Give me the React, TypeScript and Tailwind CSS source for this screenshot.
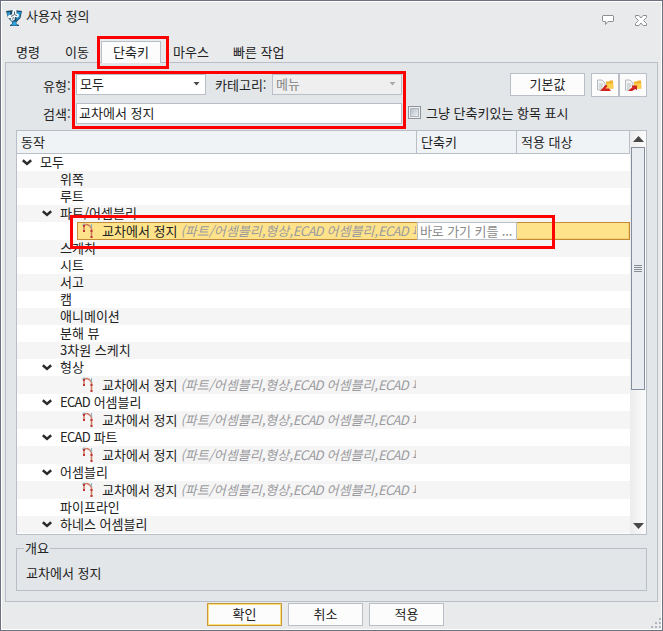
import { clsx } from "clsx";
import type { ReactNode } from "react";

type Row = {
  label: string;
  level: 0 | 1 | 2;
  open?: boolean;
  command?: boolean;
  selected?: boolean;
};

const rows: Row[] = [
  { label: "모두", level: 0, open: true },
  { label: "위쪽", level: 1 },
  { label: "루트", level: 1 },
  { label: "파트/어셈블리", level: 1, open: true },
  { label: "교차에서 정지", level: 2, command: true, selected: true },
  { label: "스케치", level: 1 },
  { label: "시트", level: 1 },
  { label: "서고", level: 1 },
  { label: "캠", level: 1 },
  { label: "애니메이션", level: 1 },
  { label: "분해 뷰", level: 1 },
  { label: "3차원 스케치", level: 1 },
  { label: "형상", level: 1, open: true },
  { label: "교차에서 정지", level: 2, command: true },
  { label: "ECAD 어셈블리", level: 1, open: true },
  { label: "교차에서 정지", level: 2, command: true },
  { label: "ECAD 파트", level: 1, open: true },
  { label: "교차에서 정지", level: 2, command: true },
  { label: "어셈블리", level: 1, open: true },
  { label: "교차에서 정지", level: 2, command: true },
  { label: "파이프라인", level: 1 },
  { label: "하네스 어셈블리", level: 1, open: true },
];

function AppLogo() {
  return (
    <svg width="16" height="17" viewBox="0 0 16 17">
      <path d="M0 2 L8 1 L16 2 L14.5 9 L10.5 13 V15 L13 16 V17 H4 V16 L6 15 V13 L2 9 Z" fill="#1d4a68" />
      <path d="M11 3 L15 3 L13.5 8.5 L10.5 11.5 Z" fill="#2097d8" />
      <path d="M1 3.5 L4 3 L4 6 L2 7.5 Z" fill="#2f9bd6" />
      <path d="M6.5 12.5 H10 V15 L12 16.5 H5 L6.5 15 Z" fill="#2da4dc" />
      <path d="M6.5 1.5 L8.5 0 L10.5 1.5 V4.5 L12.5 5 L13 7.5 L11 8.5 L9 8 L8.5 11 L6 12 L4.5 10.5 L5 9 L2.5 9.5 L1.5 8 L3 6 L6 5.5 Z" fill="#f1f5f8" />
      <path d="M8.5 2.5 V5.5 L5 7.5 M8.5 5.5 L11 6.8 M7.5 8 L6.5 10.5" fill="none" stroke="#2f4858" strokeWidth="0.8" />
    </svg>
  );
}

function Chevron() {
  return (
    <svg width="10" height="7" viewBox="0 0 10 7">
      <path d="M0.8 1.3 L5 4.9 L9.2 1.3" fill="none" stroke="#2b2b2b" strokeWidth="2.6" />
    </svg>
  );
}

function StopIcon() {
  return (
    <svg width="12" height="16" viewBox="0 0 12 16">
      <path d="M2 8.5 V3 C3 0.8 7.5 0.8 9.5 5.5 V14" fill="none" stroke="#d07a62" strokeWidth="1.5" />
      <path d="M9.5 5 V1 M0.5 2.5 L2.5 0.5" stroke="#8eb2c0" strokeWidth="1.2" />
      <path d="M1 2h2v2H1z M1 7h2v2H1z M8.5 7h2v2h-2z M8.5 13h2v2h-2z" fill="#bd3434" />
    </svg>
  );
}

function FolderIcon({ save }: { save?: boolean }) {
  return (
    <svg width="17" height="13" viewBox="0 0 17 13">
      <path d="M0.5 1 H5 L8 4 V11 H0.5 Z" fill="#f2f3f4" stroke="#b6babd" />
      <path d="M2 5h4 M2 7h4 M2 9h3" stroke="#b9bdc0" />
      <path d="M9 2.5 H12 L13 1.5 H16 L16.5 9.5 H9 Z" fill="#f0b02c" />
      <path d="M9 4.5 H16 V9.5 H9 Z" fill="#ffd04f" />
      {save ? (
        <path d="M3 12 L7.5 8 L6.5 6.5 H12 V11.5 L10.5 10 L7 12 Z" fill="#d3221f" />
      ) : (
        <path d="M3 12 L9 5.5 L10.5 7 L8.5 9.5 H12 L14 12 Z" fill="#d3221f" />
      )}
    </svg>
  );
}

function Select({ value, disabled }: { value: string; disabled?: boolean }) {
  return (
    <div
      className={clsx(
        "flex h-[21px] w-[130px] items-center justify-between border border-[#b9bec7] pr-[5px] pl-[3px]",
        disabled ? "bg-[#efefef] text-[#858585]" : "bg-white",
      )}
    >
      <span className="-mt-[2px]">{value}</span>
      <svg width="7" height="4" viewBox="0 0 7 4" className={clsx("mb-[2px]", disabled ? "text-[#a9a9a9]" : "text-[#484848]")}>
        <path d="M0.5 0 H6.5 L3.5 3.5 Z" fill="currentColor" />
      </svg>
    </div>
  );
}

function Button({ children, primary, className }: { children: ReactNode; primary?: boolean; className?: string }) {
  return (
    <button
      className={clsx(
        "flex h-[23px] w-[75px] items-center justify-center border bg-[#fcfcfc] pb-[2px]",
        primary ? "border-[#c8963c] shadow-[inset_0_0_0_1px_#ffe173]" : "border-[#b9bec7]",
        className,
      )}
    >
      {children}
    </button>
  );
}

function ActionRow({ row, index }: { row: Row; index: number }) {
  const striped = index % 2 === 1;

  if (row.command) {
    return (
      <div className={clsx("flex h-[18px] items-center pl-[60px]", striped ? "bg-[#f5f5f5]" : "bg-white")}>
        <div
          className={clsx(
            "flex h-[18px] w-[340px] items-center border-l",
            row.selected ? "border-y border-[#c58a35] bg-[#ffe38b]" : "border-transparent",
          )}
        >
          <div className="flex h-[16px] w-[338px] items-center overflow-hidden leading-[15px] whitespace-nowrap">
            <div className="ml-1 w-5 shrink-0">
              <StopIcon />
            </div>
            <span className="pb-[2px]">{row.label}</span>
            <span className="ml-[3px] pb-[2px] text-[#9b9b9f] italic">
              (파트/어셈블리,형상,<span className="tracking-[-0.7px]">ECAD</span> 어셈블리,
              <span className="tracking-[-0.7px]">ECAD</span> 파트)
            </span>
          </div>
        </div>
        {row.selected && (
          <>
            <div className="flex h-[18px] w-[100px] items-center border border-[#b9bec7] bg-white pb-[2px] pl-[2px] tracking-[-0.1px] whitespace-nowrap text-[#8b8b8b]">
              바로 가기 키를 ...
            </div>
            <div className="h-[18px] flex-1 border-y border-r border-[#c58a35] bg-[#ffe38b] shadow-[inset_-1px_-1px_0_#f5cf72]" />
          </>
        )}
      </div>
    );
  }

  return (
    <div
      className={clsx(
        "flex h-[17px] items-center leading-[15px] whitespace-nowrap",
        striped ? "bg-[#f5f5f5]" : "bg-white",
        row.level === 0 ? "pl-[5px]" : "pl-[25px]",
      )}
    >
      <div className="w-[18px] shrink-0">{row.open && <Chevron />}</div>
      {row.label.startsWith("ECAD") ? (
        <span className="pb-[2px]">
          <span className="tracking-[-0.7px]">ECAD</span>
          {row.label.slice(4)}
        </span>
      ) : (
        <span className="pb-[2px]">{row.label}</span>
      )}
    </div>
  );
}

function Scrollbar() {
  return (
    <div className="flex w-4 flex-col items-center bg-gradient-to-r from-[#ececec] to-[#fcfcfc]">
      <div className="flex h-4 items-center justify-center">
        <svg width="11" height="6" viewBox="0 0 11 6">
          <path d="M0 6 L5.5 0 L11 6 Z" fill="#484848" />
        </svg>
      </div>
      <div className="flex h-[243px] w-[14px] flex-col items-center justify-center gap-px border border-[#858e9c] bg-[#e9edf2]">
        <div className="h-px w-2 bg-[#858e93]" />
        <div className="h-px w-2 bg-[#858e93]" />
        <div className="h-px w-2 bg-[#858e93]" />
        <div className="h-px w-2 bg-[#858e93]" />
      </div>
      <div className="mt-auto flex h-[17px] items-center justify-center">
        <svg width="11" height="6" viewBox="0 0 11 6">
          <path d="M0 0 H11 L5.5 6 Z" fill="#484848" />
        </svg>
      </div>
    </div>
  );
}

export default function App() {
  return (
    <div
      lang="ko"
      className="relative h-[631px] w-[663px] overflow-hidden border border-[#6b727d] bg-[#e9eaec] font-['Noto_Sans_CJK_KR',sans-serif] text-[13px] leading-[17px] text-[#222222]"
    >
      <div className="flex h-full flex-col border border-white">
        {/* Title bar */}
        <div className="flex h-[39px] items-start pt-[7px] pr-[14px] pl-[4px]">
          <AppLogo />
          <span className="ml-1 -mt-[2px]">사용자 정의</span>
          <div className="mt-[6px] ml-auto flex items-start gap-[21px]">
            <svg width="12" height="11" viewBox="0 0 12 11">
              <path d="M1 0.5 H11 L11.5 1 V6 L11 6.5 H6 L3.5 9.5 V6.5 H1 L0.5 6 V1 Z" fill="#fff" stroke="#8d9093" />
            </svg>
            <svg width="12" height="11" viewBox="0 0 12 11">
              <path d="M0.5 0.5 H4 L6 3 L8 0.5 H11.5 V2.5 L8.5 5.5 L11.5 8.5 V10.5 H8 L6 8 L4 10.5 H0.5 V8.5 L3.5 5.5 L0.5 2.5 Z" fill="#fff" stroke="#8d9093" />
            </svg>
          </div>
        </div>

        {/* Tabs */}
        <div className="relative z-10 -mb-px flex h-[22px] items-center pl-[14px]">
          <span className="w-[49px] pb-[2px]">명령</span>
          <span className="w-[36px] pb-[2px]">이동</span>
          <div className="flex h-[22px] w-[60px] items-center justify-center border-x border-t border-[#b9bec7] bg-[#fcfcfc] pb-[3px]">
            단축키
          </div>
          <span className="ml-[12px] w-[60px] pb-[2px]">마우스</span>
          <span className="pb-[2px]">빠른 작업</span>
        </div>

        <div className="mx-[3px] h-[540px] border border-[#b9bec7] bg-[#e2e6e9] px-[10px]">
          {/* Filters */}
          <div className="flex h-[67px] flex-col gap-2 pt-[11px]">
            <div className="flex h-[21px] items-center">
              <span className="w-[60px] pt-px pl-[27px]">유형:</span>
              <Select value="모두" />
              <span className="w-[66px] pl-[9px]">카테고리:</span>
              <Select value="메뉴" disabled />
              <Button className="ml-[108px]">기본값</Button>
              <div className="ml-[6px] flex pt-px">
                <div className="flex h-6 w-7 items-center justify-center border border-[#b9bec7] bg-[#fcfcfc]">
                  <FolderIcon />
                </div>
                <div className="flex h-6 w-7 items-center justify-center border border-[#b9bec7] bg-[#fcfcfc]">
                  <FolderIcon save />
                </div>
              </div>
            </div>
            <div className="flex h-[21px] items-center">
              <span className="w-[60px] pl-[27px]">검색:</span>
              <div className="flex h-[21px] w-[326px] items-center border border-[#b9bec7] bg-white pb-[2px] pl-[2px]">
                교차에서 정지
              </div>
              <div className="mb-[2px] ml-[6px] flex h-[13px] w-[13px] items-center justify-center border border-[#8e9499] bg-[#eef0f2]">
                <div className="h-[9px] w-[9px] border border-[#aeb5bf] bg-gradient-to-br from-[#b5bfca] to-[#edf0f3]" />
              </div>
              <span className="ml-[5px] pb-[2px]">그냥 단축키있는 항목 표시</span>
            </div>
          </div>

          {/* Shortcut table */}
          <div className="flex h-[405px] border border-[#b9bec7] bg-white">
            <div className="flex w-[613px] flex-col">
              <div className="flex h-[23px] border-b border-[#b9bec7] bg-[#f0f3f6]">
                <div className="flex w-[400px] items-center border-r border-[#b9bec7] pb-[2px] pl-1">동작</div>
                <div className="flex w-[100px] items-center border-r border-[#b9bec7] pb-[2px] pl-1">단축키</div>
                <div className="flex flex-1 items-center border-r border-[#b9bec7] pb-[2px] pl-1">적용 대상</div>
              </div>
              {rows.map((row, index) => (
                <ActionRow key={index} row={row} index={index} />
              ))}
            </div>
            <Scrollbar />
          </div>

          {/* Overview */}
          <fieldset className="mt-[5px] h-[51px] border border-[#b9bec7] pl-[9px]">
            <legend className="-ml-[2px] px-px">
              <span className="block -translate-y-px">개요</span>
            </legend>
            <p className="mt-[7px]">교차에서 정지</p>
          </fieldset>
        </div>

        <div className="mt-px flex gap-[6px] pl-[205px]">
          <Button primary>확인</Button>
          <Button>취소</Button>
          <Button>적용</Button>
        </div>
      </div>

      {/* Resize grip */}
      <svg width="10" height="10" viewBox="0 0 10 10" className="absolute right-[1px] bottom-[2px]">
        <path d="M8 0h2v2H8z M4 4h2v2H4z M8 4h2v2H8z M0 8h2v2H0z M4 8h2v2H4z M8 8h2v2H8z" fill="#afb7c3" />
      </svg>

      {/* Callouts drawn over the dialog */}
      <div className="absolute top-[35px] left-[96px] z-20 h-[33px] w-[72px] border-3 border-[#ff0000]" />
      <div className="absolute top-[70px] left-[71px] z-20 h-[58px] w-[334px] border-3 border-[#ff0000]" />
      <div className="absolute top-[214px] left-[69px] z-20 h-[34px] w-[485px] border-3 border-[#ff0000]" />
    </div>
  );
}
